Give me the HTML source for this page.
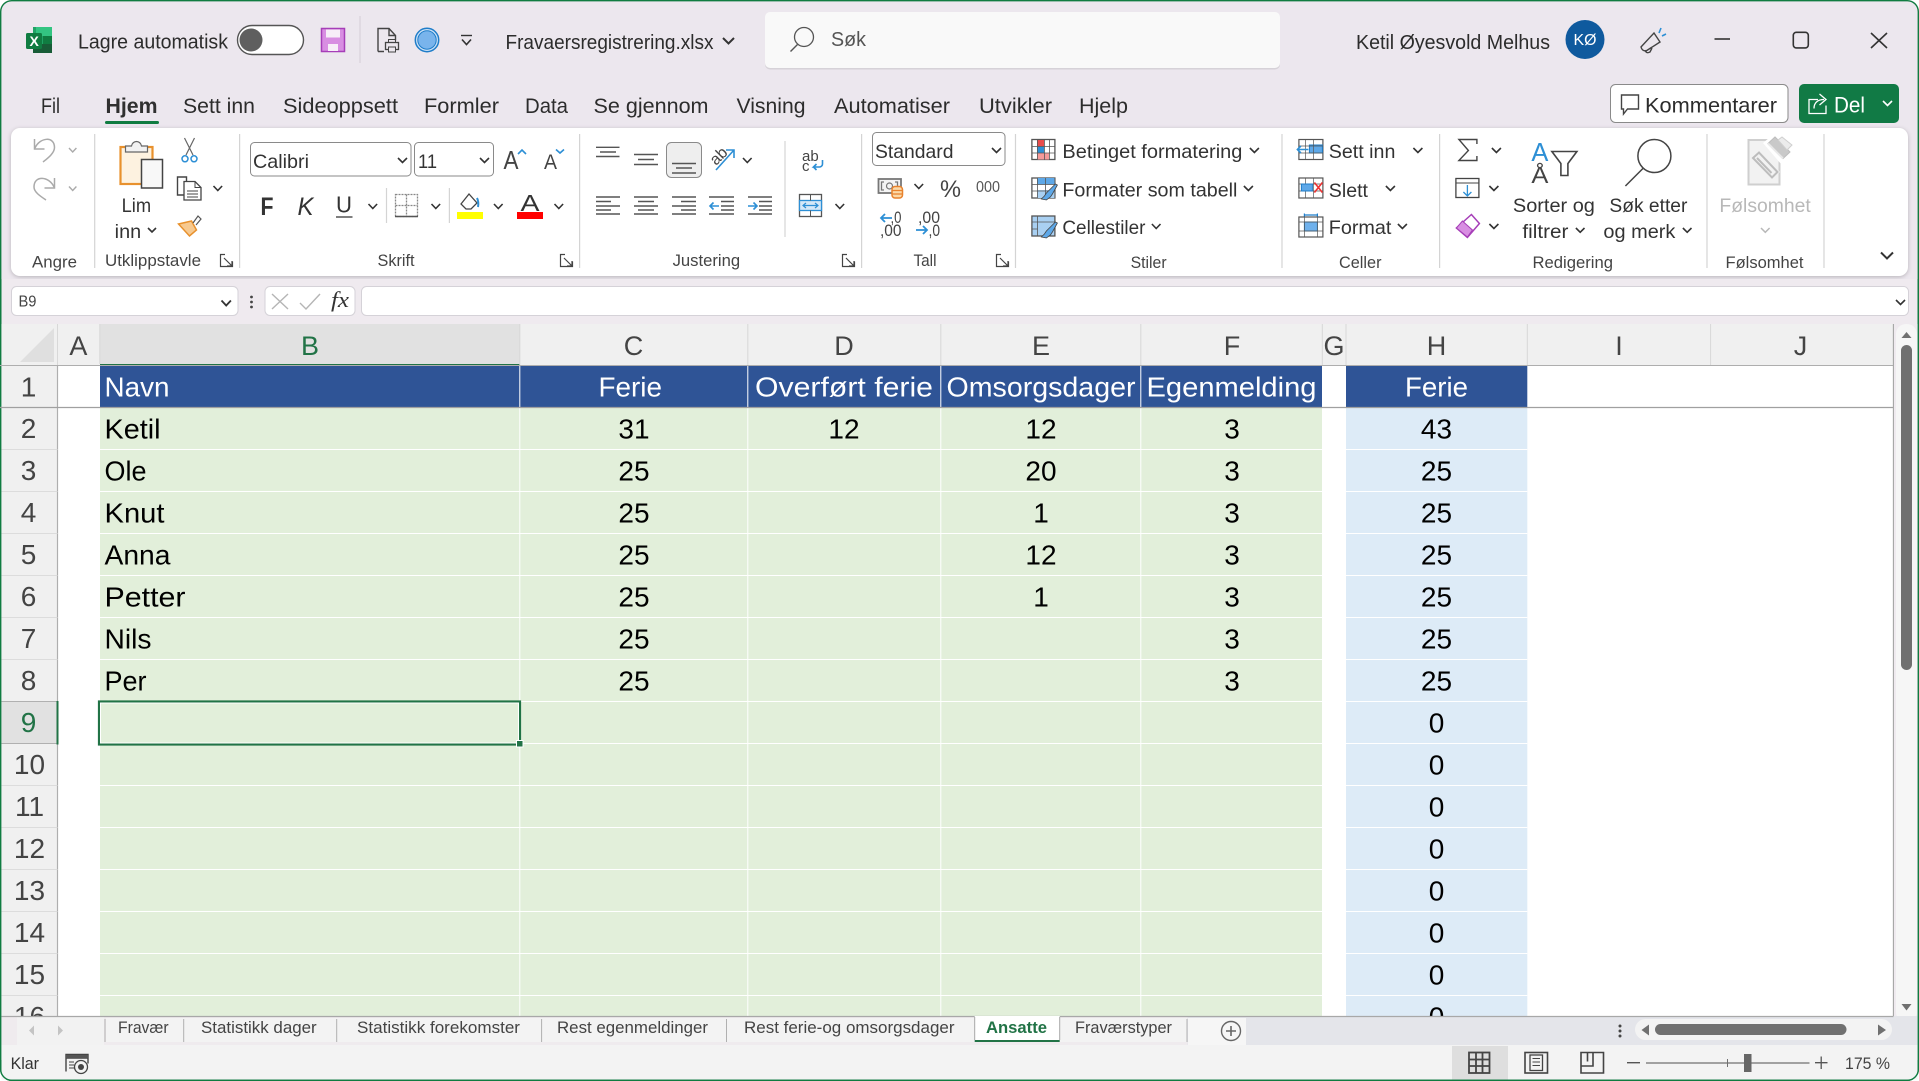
<!DOCTYPE html>
<html lang="no"><head><meta charset="utf-8"><title>Fravaersregistrering.xlsx - Excel</title>
<style>
html,body{margin:0;padding:0;background:#fff;width:1919px;height:1081px;overflow:hidden}
svg{display:block}
text{font-family:"Liberation Sans",sans-serif;fill:#333;white-space:pre}
.t{font-size:20.5px;fill:#2c2c2c}
.m{font-size:21px;fill:#2c2c2c}
.r{font-size:19.5px;fill:#333}
.g{font-size:16.5px;fill:#444}
.s{font-size:16.5px;fill:#444}
.h{font-size:27px;fill:#444;text-anchor:middle}
.n{font-size:28px;fill:#444;text-anchor:middle}
.c{font-size:28px;fill:#000}
.d{font-size:28px;fill:#000;text-anchor:middle}
.w{font-size:28px;fill:#fff}
.ch{fill:none;stroke:#333;stroke-width:1.6}
.l{fill:none;stroke:#555;stroke-width:1.4}
.k{fill:none;stroke:#444;stroke-width:1.4}
.b{fill:none;stroke:#2d8fd5;stroke-width:1.6}
.sep{stroke:#d4d4d4;stroke-width:1.2}
</style></head><body>
<svg xmlns="http://www.w3.org/2000/svg" width="1919" height="1081" viewBox="0 0 1919 1081">
<defs><clipPath id="gc"><rect x="0" y="324" width="1894" height="692"/></clipPath></defs>
<!-- window -->
<rect x="0.7" y="0.7" width="1917.6" height="1079.6" rx="11" fill="#ece7ee" stroke="#107c41" stroke-width="1.4"/>

<!-- title bar -->
<path d="M33 27h19v26H33z" fill="#21a366"/><path d="M36 27h16v9H36z" fill="#33c481"/><path d="M33 44h19v9H33z" fill="#185c37"/><path d="M43 36h9v8h-9z" fill="#107c41"/>
<rect x="26" y="33" width="16" height="16" rx="1.5" fill="#107c41"/><text x="29.5" y="46" style="font-size:14px;font-weight:bold;fill:#fff">X</text>
<text class="t" x="78" y="48.5" textLength="150" lengthAdjust="spacingAndGlyphs">Lagre automatisk</text>
<rect x="237.5" y="25.5" width="66" height="29" rx="14.5" fill="#fff" stroke="#555" stroke-width="1.4"/><circle cx="251" cy="40" r="11.5" fill="#5f5f5f"/>
<rect x="321.5" y="28.5" width="23" height="23" fill="#d88ee2" stroke="#a63eb8" stroke-width="1.5"/><rect x="326" y="29.5" width="14" height="8" fill="#f7eef8"/><rect x="328" y="44" width="10" height="7" fill="#f7eef8"/>
<line x1="360" y1="16" x2="360" y2="63" stroke="#d3ced6"/>
<path class="k" d="M378 51.5v-23h11l6.500 7v5M389 28.500v7h6.500M378 51.500h6"/><rect x="385.500" y="42.500" width="13" height="7" fill="#ece7ee" stroke="#444" stroke-width="1.300"/><rect x="388.500" y="39.500" width="7" height="3" fill="none" stroke="#444"/><rect x="388.500" y="47" width="7" height="5" fill="#ece7ee" stroke="#444"/>
<circle cx="427" cy="40" r="11.7" fill="#cde2f7" stroke="#1f7dc9" stroke-width="1.5"/><circle cx="427" cy="40" r="9.2" fill="#79b4ec" stroke="#1f7dc9"/>
<path d="M461 35.5h11" stroke="#333" stroke-width="1.4"/><path class="ch" d="M462 39.5l4.5 5 4.5-5"/>
<text class="t" x="505.500" y="49" textLength="208" lengthAdjust="spacingAndGlyphs">Fravaersregistrering.xlsx</text>
<path d="M723 38l5.5 5.5 5.5-5.5" fill="none" stroke="#333" stroke-width="2"/>
<rect x="765" y="13.5" width="515" height="56" rx="5" fill="#d6d2d8"/><rect x="765" y="12" width="515" height="56" rx="5" fill="#f9f9f9"/>
<circle cx="804" cy="37" r="9.5" fill="none" stroke="#555" stroke-width="1.3"/><line x1="797.500" y1="44.500" x2="790.500" y2="51.500" stroke="#555" stroke-width="1.4"/>
<text class="t" x="831" y="46" textLength="35" lengthAdjust="spacingAndGlyphs" style="fill:#555">Søk</text>
<g transform="translate(-1 0)">
<text class="t" x="1357" y="49" textLength="194" lengthAdjust="spacingAndGlyphs">Ketil Øyesvold Melhus</text>
<circle cx="1586" cy="39.5" r="19.5" fill="#0f5a9e"/><text x="1574.5" y="45" textLength="23" lengthAdjust="spacingAndGlyphs" style="font-size:15.5px;fill:#fff">KØ</text>
<path class="k" d="M1655 33l6 9-14 9q-4 0-5-4zM1646 50q1 4 5 2l2-4"/><path class="b" d="M1660 33l2-5M1663 36l4-2"/>
<line x1="1715.5" y1="39" x2="1731" y2="39" stroke="#333" stroke-width="1.6"/>
<rect x="1794.3" y="32.3" width="15" height="15.6" rx="3" fill="none" stroke="#333" stroke-width="1.6"/>
<path d="M1872 33l16 15M1888 33l-16 15" stroke="#333" stroke-width="1.6" fill="none"/>
</g>

<!-- menu tabs -->
<g transform="translate(-1 0)">
<text class="m" x="42" y="113" textLength="19" lengthAdjust="spacingAndGlyphs">Fil</text>
<text class="m" x="106.500" y="113" textLength="52" lengthAdjust="spacingAndGlyphs" style="font-weight:bold;fill:#303030">Hjem</text>
<rect x="106" y="121" width="54" height="3" rx="1.5" fill="#107c41"/>
<text class="m" x="184" y="113" textLength="72" lengthAdjust="spacingAndGlyphs">Sett inn</text>
<text class="m" x="284" y="113" textLength="115" lengthAdjust="spacingAndGlyphs">Sideoppsett</text>
<text class="m" x="425" y="113" textLength="75" lengthAdjust="spacingAndGlyphs">Formler</text>
<text class="m" x="526" y="113" textLength="43" lengthAdjust="spacingAndGlyphs">Data</text>
<text class="m" x="594.500" y="113" textLength="115" lengthAdjust="spacingAndGlyphs">Se gjennom</text>
<text class="m" x="737.500" y="113" textLength="69" lengthAdjust="spacingAndGlyphs">Visning</text>
<text class="m" x="835" y="113" textLength="116" lengthAdjust="spacingAndGlyphs">Automatiser</text>
<text class="m" x="980" y="113" textLength="73" lengthAdjust="spacingAndGlyphs">Utvikler</text>
<text class="m" x="1080" y="113" textLength="49" lengthAdjust="spacingAndGlyphs">Hjelp</text>
<rect x="1611.5" y="84.5" width="177.5" height="38" rx="5" fill="#fff" stroke="#8a8a8a"/>
<path class="k" d="M1622.5 95h17v14h-11l-4 5v-5h-2z"/>
<text class="m" x="1646" y="112.5" textLength="132" lengthAdjust="spacingAndGlyphs">Kommentarer</text>
<rect x="1800" y="84" width="100" height="39" rx="5" fill="#117a45"/>
<path d="M1819 99.500h-9v14h17v-8M1815 108.500c0-6 4-9 10-9M1820.500 94l6.500 5.500-6.500 5.500" fill="none" stroke="#fff" stroke-width="1.300"/>
<text class="m" x="1835" y="112.500" textLength="31" lengthAdjust="spacingAndGlyphs" style="fill:#fff;font-size:22px">Del</text>
<path d="M1884 101l4.500 4.500 4.500-4.500" fill="none" stroke="#fff" stroke-width="1.6"/>
</g>

<!-- ribbon panel -->
<rect x="11" y="128" width="1897" height="148" rx="9" fill="#fff" style="filter:drop-shadow(0 1px 2px rgba(0,0,0,.22))"/>
<g class="sep"><line x1="94.700" y1="134" x2="94.700" y2="268"/><line x1="239.600" y1="134" x2="239.600" y2="268"/><line x1="579.600" y1="134" x2="579.600" y2="268"/><line x1="861.600" y1="134" x2="861.600" y2="268"/><line x1="1015.500" y1="134" x2="1015.500" y2="268"/><line x1="1282" y1="134" x2="1282" y2="268"/><line x1="1439.600" y1="134" x2="1439.600" y2="268"/><line x1="1707" y1="134" x2="1707" y2="268"/><line x1="1824" y1="134" x2="1824" y2="268"/><line x1="386.500" y1="188" x2="386.500" y2="223"/><line x1="449.400" y1="188" x2="449.400" y2="223"/><line x1="785" y1="141" x2="785" y2="237"/></g>
<!-- group labels -->
<text class="g" x="32" y="267.500" textLength="45" lengthAdjust="spacingAndGlyphs">Angre</text>
<text class="g" x="105" y="266" textLength="96" lengthAdjust="spacingAndGlyphs">Utklippstavle</text>
<text class="g" x="377.500" y="266" textLength="37" lengthAdjust="spacingAndGlyphs">Skrift</text>
<text class="g" x="672.600" y="266" textLength="67.500" lengthAdjust="spacingAndGlyphs">Justering</text>
<text class="g" x="913.500" y="266" textLength="23" lengthAdjust="spacingAndGlyphs">Tall</text>
<text class="g" x="1130.600" y="268" textLength="36" lengthAdjust="spacingAndGlyphs">Stiler</text>
<text class="g" x="1339" y="268" textLength="42.500" lengthAdjust="spacingAndGlyphs">Celler</text>
<text class="g" x="1532.500" y="268" textLength="80.500" lengthAdjust="spacingAndGlyphs">Redigering</text>
<text class="g" x="1725.500" y="268" textLength="78" lengthAdjust="spacingAndGlyphs">Følsomhet</text>
<!-- launchers -->
<path class="k" style="stroke-width:1.200" d="M225 254.500h-4.500v12h12v-5M224 258l8 8m0-5v5h-5"/>
<path class="k" style="stroke-width:1.200" d="M565 254.500h-4.500v12h12v-5M564 258l8 8m0-5v5h-5"/>
<path class="k" style="stroke-width:1.200" d="M847 254.500h-4.500v12h12v-5M846 258l8 8m0-5v5h-5"/>
<path class="k" style="stroke-width:1.200" d="M1001 254.500h-4.500v12h12v-5M1000 258l8 8m0-5v5h-5"/>

<!-- undo/redo -->
<path d="M34.500 139v10h10M35 148C40 137 54.500 136 54.500 147.500C54.500 153 48 158 43 162" fill="none" stroke="#aaa" stroke-width="1.500"/>
<path d="M54.500 178v10h-10M54 187C49 176 34 175 34 187C34 192 40 196 46 200" fill="none" stroke="#aaa" stroke-width="1.500"/>
<path d="M69 148l3.700 4 3.700-4M69 186.500l3.700 4 3.700-4" fill="none" stroke="#aaa" stroke-width="1.400"/>
<!-- clipboard -->
<rect x="120.500" y="147" width="32" height="37" fill="#fdf2e0" stroke="#e8912d" stroke-width="2.200"/>
<path d="M125.500 152v-6h6c1-6 9-6 10 0h6v6z" fill="#f2f2f2" stroke="#666" stroke-width="1.200"/>
<rect x="141.500" y="159.500" width="21" height="28.500" fill="#f8f8f8" stroke="#444" stroke-width="1.500"/>
<text class="r" x="121.600" y="212" textLength="29.500" lengthAdjust="spacingAndGlyphs">Lim</text>
<text class="r" x="114.700" y="238" textLength="26.500" lengthAdjust="spacingAndGlyphs">inn</text>
<path class="ch" d="M148 228l4 4 4-4"/>
<path d="M186 155l8.500-17M193 155l-8.500-17" fill="none" stroke="#666" stroke-width="1.200"/><circle cx="185" cy="158.800" r="3" fill="none" stroke="#2d8fd5" stroke-width="1.500"/><circle cx="194" cy="158.800" r="3" fill="none" stroke="#2d8fd5" stroke-width="1.500"/>
<path class="k" d="M184 195h-6.500v-18h9v4"/><path d="M184 181.500h11l6 6v12.500h-17z" fill="#fff" stroke="#444" stroke-width="1.300"/><path class="k" style="stroke-width:1" d="M187 191h11M187 194h11M187 197h11M195 181.500v6h6"/>
<path class="ch" d="M213.500 186l4.300 4.500 4.300-4.500"/>
<path d="M178.500 224l13-3 5 9-7 6z" fill="#f7c98f" stroke="#e8912d" stroke-width="1.500"/><path d="M193 223l5-7 3 3-5 6" fill="#fff" stroke="#555" stroke-width="1.200"/>

<!-- font -->
<rect x="250.500" y="142.500" width="160.500" height="33.500" rx="4" fill="#fff" stroke="#8a8a8a"/>
<text class="r" x="253" y="168" textLength="56" lengthAdjust="spacingAndGlyphs">Calibri</text><path class="ch" d="M398 158l4.500 4.500 4.500-4.500"/>
<rect x="414.500" y="142.500" width="79" height="33.500" rx="4" fill="#fff" stroke="#8a8a8a"/>
<text class="r" x="418" y="168" textLength="19" lengthAdjust="spacingAndGlyphs">11</text><path class="ch" d="M480 158l4.500 4.500 4.500-4.500"/>
<text x="503.500" y="169" textLength="15" lengthAdjust="spacingAndGlyphs" style="font-size:26px;fill:#444">A</text><path class="b" d="M518 154l4-4 4 4"/>
<text x="544" y="169" textLength="13" lengthAdjust="spacingAndGlyphs" style="font-size:21px;fill:#444">A</text><path class="b" d="M556 149.500l4 3.500 4-3.500"/>
<text x="260.500" y="215" textLength="13" lengthAdjust="spacingAndGlyphs" style="font-size:25px;font-weight:bold;fill:#333">F</text>
<text x="297.500" y="215" textLength="16" lengthAdjust="spacingAndGlyphs" style="font-size:25px;font-style:italic;fill:#333">K</text>
<text x="336" y="212.500" textLength="16" lengthAdjust="spacingAndGlyphs" style="font-size:23px;fill:#333">U</text><line x1="336" y1="217" x2="352.500" y2="217" stroke="#333" stroke-width="1.300"/>
<path class="ch" d="M368.500 204l4.300 4.500 4.300-4.500"/>
<g fill="none" stroke="#888" stroke-width="1.300" stroke-dasharray="2 1"><rect x="395.500" y="194.500" width="22" height="22"/><path d="M406.500 194.500v22M395.500 205.500h22"/></g><line x1="395" y1="216.500" x2="418" y2="216.500" stroke="#555" stroke-width="1.500"/>
<path class="ch" d="M431.500 204l4.300 4.500 4.300-4.500"/>
<path d="M461 204l8-10 8 9-6 6h-5z" fill="#fff" stroke="#444" stroke-width="1.300"/><path d="M477 198q2 4 1 9" fill="none" stroke="#2d8fd5" stroke-width="2"/><rect x="457" y="212" width="26" height="7" fill="#ffff00"/>
<path class="ch" d="M494 204l4.300 4.500 4.300-4.500"/>
<text x="520.500" y="211" textLength="19" lengthAdjust="spacingAndGlyphs" style="font-size:23px;fill:#333">A</text><rect x="517" y="212" width="26" height="7" fill="#f00"/>
<path class="ch" d="M554.500 204l4.300 4.500 4.300-4.500"/>
<!-- align -->
<g class="l"><path d="M596 147.300h23.500M600 152h16M596 156.500h23.500"/><path d="M634 154.500h24M638 159.500h16M634 164.500h24"/></g>
<rect x="666.500" y="142.500" width="35" height="35" rx="5" fill="#eee" stroke="#8a8a8a"/>
<path class="l" d="M672 163.500h24M676 168h16M672 173h24"/>
<text x="0" y="0" transform="translate(716 166) rotate(-45)" style="font-size:16px;fill:#444">ab</text><path class="b" d="M716 170l18-20M726 150h8v8"/>
<path class="ch" d="M743 158l4.300 4.500 4.300-4.500"/>
<g class="l"><path d="M596 197h24M596 201.500h15M596 206h24M596 210h15M596 214h24"/><path d="M634 197h24M638 201.500h16M634 206h24M638 210h16M634 214h24"/><path d="M672 197h24M681 201.500h15M672 206h24M681 210h15M672 214h24"/><path d="M709 197h25M721 201.500h13M721 206h13M721 210h13M709 214h25"/><path d="M748 197h24M759 201.500h13M759 206h13M759 210h13M748 214h24"/></g>
<path class="b" d="M719 206h-9m3.500-3.500l-3.500 3.500 3.500 3.500M748 206h9m-3.500-3.500l3.500 3.500-3.500 3.500"/>
<text x="802" y="161" style="font-size:15px;fill:#444">ab</text><text x="802" y="171" style="font-size:15px;fill:#444">c</text><path class="b" d="M822.500 160v4a3 3 0 0 1-3 3h-6l3-3m-3 3l3 3"/>
<rect x="799.500" y="194.500" width="22" height="22" fill="#fff" stroke="#555" stroke-width="1.300"/><rect x="799.500" y="200.500" width="22" height="10" fill="#d5e8f8" stroke="#2d8fd5" stroke-width="1.300"/><path d="M810.500 194.500v6M810.500 210.500v6" stroke="#555"/><path class="b" style="stroke-width:1.200" d="M803 205.500h15m-3-2.500l3 2.500-3 2.500m-9-5l-3 2.500 3 2.500"/>
<path class="ch" d="M835.500 204l4.300 4.500 4.300-4.500"/>
<!-- number -->
<rect x="872.500" y="132.500" width="132.500" height="33" rx="4" fill="#fff" stroke="#8a8a8a"/>
<text class="r" x="875" y="158" textLength="78.500" lengthAdjust="spacingAndGlyphs">Standard</text><path class="ch" d="M992 148l4.500 4.500 4.500-4.500"/>
<rect x="878.500" y="179" width="22.500" height="14" fill="#f4f4f4" stroke="#777" stroke-width="1.800"/><path d="M884 182h-2.500v8h2.500M895 182h2.500v8H895" fill="none" stroke="#777" stroke-width="1.300"/><circle cx="889.500" cy="186" r="3" fill="none" stroke="#777" stroke-width="1.200"/>
<rect x="892" y="186.500" width="10.500" height="11.500" rx="3" fill="#fbd9a8" stroke="#e8822d" stroke-width="1.500"/><path d="M892 190.500h10.500M892 194h10.500" stroke="#e8822d" stroke-width="1.200"/>
<path class="ch" d="M914.500 184l4.300 4.500 4.300-4.500"/>
<text x="940" y="197" textLength="21" lengthAdjust="spacingAndGlyphs" style="font-size:24px;fill:#444">%</text>
<text x="976" y="192" textLength="24" lengthAdjust="spacingAndGlyphs" style="font-size:15.500px;fill:#555">000</text>
<text x="890.500" y="223" textLength="11" lengthAdjust="spacingAndGlyphs" style="font-size:16.500px;fill:#444">,0</text><text x="880" y="236" textLength="21.500" lengthAdjust="spacingAndGlyphs" style="font-size:16.500px;fill:#444">,00</text><path class="b" style="stroke-width:1.800" d="M892 218h-11m4-4l-4 4 4 4"/>
<text x="918" y="223" textLength="22" lengthAdjust="spacingAndGlyphs" style="font-size:16.500px;fill:#444">,00</text><text x="928.500" y="236" textLength="11.500" lengthAdjust="spacingAndGlyphs" style="font-size:16.500px;fill:#444">,0</text><path class="b" style="stroke-width:1.800" d="M916 230h11m-4-4l4 4-4 4"/>
<!-- styles -->
<g transform="translate(-.6 0)">
<rect x="1032.500" y="139.500" width="23" height="20" fill="#fff" stroke="#555" stroke-width="1.300"/><rect x="1038" y="140" width="7" height="6.500" fill="#e94c4c"/><rect x="1038" y="146.500" width="7" height="6.500" fill="#2d8fd5"/><rect x="1038" y="153" width="12" height="6.500" fill="#f59a9a"/><path d="M1032.500 146.500h23M1032.500 153h23M1038 139.500v20M1045 139.500v20M1050 139.500v20" stroke="#555" stroke-width=".8"/>
<text class="r" x="1063" y="158" textLength="180" lengthAdjust="spacingAndGlyphs">Betinget formatering</text><path class="ch" d="M1250.500 148l4.500 4.500 4.500-4.500"/>
<rect x="1032.500" y="178" width="23" height="20" fill="#fff" stroke="#555" stroke-width="1.300"/><rect x="1038" y="178" width="17" height="6.500" fill="#5ea8e8"/><rect x="1038" y="190" width="17" height="8" fill="#a9d0f2"/><path d="M1032.500 184.500h23M1032.500 191h23M1038 178v20M1046 178v20" stroke="#555" stroke-width=".8"/><path d="M1056 184l-9 9-2 3-3 3 5 1 4-3 2-3 5-9z" fill="#5ea8e8" stroke="#444" stroke-width=".8"/>
<text class="r" x="1063" y="196.700" textLength="175" lengthAdjust="spacingAndGlyphs">Formater som tabell</text><path class="ch" d="M1244.500 186l4.500 4.500 4.500-4.500"/>
<rect x="1032.500" y="216" width="23" height="20" fill="#a9d0f2" stroke="#555" stroke-width="1.300"/><path d="M1038 216v20M1032.500 222h23M1032.500 229h6" stroke="#555" stroke-width=".8"/><path d="M1056 222l-9 9-2 3-3 3 5 1 4-3 2-3 5-9z" fill="#5ea8e8" stroke="#444" stroke-width=".8"/>
<text class="r" x="1063" y="234" textLength="83" lengthAdjust="spacingAndGlyphs">Cellestiler</text><path class="ch" d="M1152.500 224l4.300 4.500 4.300-4.500"/>
<!-- cells -->
<rect x="1299.500" y="139.500" width="24" height="20" fill="#fff" stroke="#555" stroke-width="1.200"/><rect x="1310" y="145" width="13" height="8" fill="#5ea8e8" stroke="#1f7dc9"/><path d="M1299.500 146h24M1299.500 153h24M1306 139.500v20M1314 139.500v20" stroke="#555" stroke-width=".7"/><path d="M1309 149.500h-11m3.500-3.500l-3.500 3.500 3.500 3.500" fill="none" stroke="#2d8fd5" stroke-width="1.600"/>
<text class="r" x="1329.400" y="158" textLength="66.600" lengthAdjust="spacingAndGlyphs">Sett inn</text><path class="ch" d="M1414 148l4.500 4.500 4.500-4.500"/>
<rect x="1299.500" y="178" width="24" height="20" fill="#fff" stroke="#555" stroke-width="1.200"/><path d="M1299.500 184h24M1299.500 191h24M1306 178v20M1314 178v20" stroke="#555" stroke-width=".7"/><rect x="1302" y="184" width="11" height="7" fill="#5ea8e8" stroke="#1f7dc9"/><path d="M1315 182.500l8 10M1323 182.500l-8 10" stroke="#e33" stroke-width="1.600"/>
<text class="r" x="1329.400" y="197" textLength="39.200" lengthAdjust="spacingAndGlyphs">Slett</text><path class="ch" d="M1386.500 186l4.500 4.500 4.500-4.500"/>
<rect x="1299.500" y="217" width="24" height="20" fill="#fff" stroke="#555" stroke-width="1.200"/><rect x="1305" y="222" width="13" height="9" fill="#6fb1ec" stroke="#1f7dc9"/><path d="M1299.500 222h24M1299.500 231h24M1305 217v20M1318 217v20" stroke="#555" stroke-width=".7"/><path d="M1305 213.500v3M1318 213.500v3M1305 215h13" stroke="#1f7dc9" stroke-width="1.200"/>
<text class="r" x="1329.400" y="234" textLength="62.600" lengthAdjust="spacingAndGlyphs">Format</text><path class="ch" d="M1398.500 224l4.500 4.500 4.500-4.500"/>
<!-- editing -->
<path class="k" d="M1477.500 144v-4.500h-18l9.500 11-9.500 10h18v-4.500"/><path class="ch" d="M1492.500 148l4.500 4.500 4.500-4.500"/>
<rect x="1456.500" y="178.500" width="23" height="19" fill="#fff" stroke="#444" stroke-width="1.300"/><line x1="1456.500" y1="183" x2="1479.500" y2="183" stroke="#444"/><path class="b" style="stroke-width:1.300" d="M1468 185v11m-4-4l4 4 4-4"/><path class="ch" d="M1490 186l4.500 4.500 4.500-4.500"/>
<path d="M1472 214.500l8 9-12 14-11-9.500z" fill="#fff" stroke="#a63eb8" stroke-width="1.500"/><path d="M1463 221l10 9-5 7-11-9z" fill="#d88ee2" stroke="#a63eb8"/><path class="ch" d="M1490 224l4.500 4.500 4.500-4.500"/>
<text x="1532" y="161" textLength="17" lengthAdjust="spacingAndGlyphs" style="font-size:26px;fill:#2d8fd5">A</text>
<text x="1532" y="183" textLength="17" lengthAdjust="spacingAndGlyphs" style="font-size:23px;fill:#444">Å</text>
<path class="k" style="stroke-width:1.600" d="M1552.500 151.500h25l-9 12v12h-7v-12z"/>
<text class="r" x="1513.500" y="212" textLength="82" lengthAdjust="spacingAndGlyphs">Sorter og</text>
<text class="r" x="1523" y="238" textLength="46" lengthAdjust="spacingAndGlyphs">filtrer</text><path class="ch" d="M1576.500 228l4.300 4.300 4.300-4.300"/>
<circle cx="1655" cy="156" r="16.500" fill="none" stroke="#444" stroke-width="1.500"/><line x1="1643.500" y1="168.500" x2="1626" y2="186" stroke="#444" stroke-width="1.500"/>
<text class="r" x="1610" y="212" textLength="78" lengthAdjust="spacingAndGlyphs">Søk etter</text>
<text class="r" x="1604" y="238" textLength="72" lengthAdjust="spacingAndGlyphs">og merk</text><path class="ch" d="M1683.500 228l4.300 4.300 4.300-4.300"/>
</g>
<!-- sensitivity -->
<rect x="1748.500" y="140" width="31" height="44.500" fill="#f2f2f2" stroke="#cfcfcf" stroke-width="2"/>
<path d="M1751 158l8-8 21 22-8 8z" fill="#f2f2f2"/>
<path d="M1753 158l6-5.500 18.500 19.500-5.500 5.500zM1757 158l14.500 15" fill="none" stroke="#bdbdbd" stroke-width="2"/>
<path d="M1763 143l12-10 20 14-9 15-5 2z" fill="#fff"/>
<path d="M1768 143.500l7-6.500 15 15-7 6.500z" fill="#c9c9c9" stroke="#bdbdbd"/><path d="M1768 143.500l15 15" stroke="#e9e9e9" stroke-width="2"/>
<path d="M1778 140l4-3 10 8-5 5z" fill="#ececec" stroke="#cfcfcf"/>
<text class="r" x="1719.400" y="212" textLength="91.400" lengthAdjust="spacingAndGlyphs" style="fill:#b8b8b8">Følsomhet</text><path d="M1761 228l4.300 4.300 4.300-4.300" fill="none" stroke="#b8b8b8" stroke-width="1.500"/>
<path d="M1881 252.500l6 6 6-6" fill="none" stroke="#333" stroke-width="2"/>

<!-- formula bar -->
<rect x="0.700" y="279" width="1917.600" height="45" fill="#efeaef"/>
<rect x="0" y="279" width="1.500" height="45" fill="#107c41"/>
<rect x="1917.500" y="279" width="1.500" height="45" fill="#107c41"/>
<rect x="11.500" y="286.500" width="226.500" height="29" rx="5" fill="#fff" stroke="#d5d2d8"/>
<text x="18.500" y="306.500" textLength="18" lengthAdjust="spacingAndGlyphs" style="font-size:15.500px;fill:#444">B9</text><path class="ch" style="stroke-width:1.800" d="M221.500 300.500l4.700 5 4.700-5"/>
<circle cx="251.500" cy="297" r="1.400" fill="#444"/><circle cx="251.500" cy="302" r="1.400" fill="#444"/><circle cx="251.500" cy="307" r="1.400" fill="#444"/>
<rect x="265" y="286.500" width="90" height="29" rx="5" fill="#fff" stroke="#d5d2d8"/>
<path d="M272 294l16 15M288 294l-16 15M300 303l6 6 14-15" fill="none" stroke="#b5b5b5" stroke-width="1.400"/>
<text x="331" y="307" textLength="18" lengthAdjust="spacingAndGlyphs" style="font-family:'Liberation Serif',serif;font-style:italic;font-size:22px;fill:#333">fx</text>
<rect x="361.500" y="286.500" width="1547" height="29" rx="5" fill="#fff" stroke="#d5d2d8"/>
<path class="ch" style="stroke-width:1.600" d="M1896 300l4.500 4.500 4.500-4.500"/>

<!-- grid -->
<rect x="1.500" y="324" width="1892" height="692" fill="#fff"/>
<rect x="1.500" y="324" width="1892" height="41.500" fill="#f0f0f0"/>
<rect x="1.500" y="324" width="56" height="692" fill="#f0f0f0"/>
<path d="M20 362l34-34v34z" fill="#dfdfdf"/>
<rect x="100" y="324" width="420" height="40" fill="#e1e1e1"/>
<rect x="100" y="364" width="420" height="2.200" fill="#217346"/>
<path d="M57.500 324v692M99.800 324v40M519.800 324v41M747.800 324v41M940.800 324v41M1140.800 324v41M1322.300 324v41M1346 324v41M1527.300 324v41M1710.600 324v41" stroke="#d8d8d8" fill="none"/>
<line x1="57.500" y1="366" x2="57.500" y2="1016" stroke="#aeaeae" stroke-width="1.200"/>
<line x1="0" y1="365.500" x2="1894" y2="365.500" stroke="#aeaeae"/>
<rect x="100" y="366" width="1222" height="41" fill="#2f5496"/>
<rect x="1346" y="366" width="181.300" height="41" fill="#2f5496"/>
<rect x="100" y="408" width="1222" height="608" fill="#e2efda"/>
<rect x="1346" y="408" width="181.300" height="608" fill="#ddebf7"/>
<path d="M519.800 366v650M747.800 366v650M940.800 366v650M1140.800 366v650" stroke="#fff" fill="none"/>
<path d="M100 449.500h1222M100 491.500h1222M100 533.500h1222M100 575.500h1222M100 617.500h1222M100 659.500h1222M100 701.500h1222M100 743.500h1222M100 785.500h1222M100 827.500h1222M100 869.500h1222M100 911.500h1222M100 953.500h1222M100 995.500h1222M1346 449.500h181.300M1346 491.500h181.300M1346 533.500h181.300M1346 575.500h181.300M1346 617.500h181.300M1346 659.500h181.300M1346 701.500h181.300M1346 743.500h181.300M1346 785.500h181.300M1346 827.500h181.300M1346 869.500h181.300M1346 911.500h181.300M1346 953.500h181.300M1346 995.500h181.300" stroke="#fff" fill="none"/>
<path d="M1.500 449.500h56M1.500 491.500h56M1.500 533.500h56M1.500 575.500h56M1.500 617.500h56M1.500 659.500h56M1.500 701.500h56M1.500 743.500h56M1.500 785.500h56M1.500 827.500h56M1.500 869.500h56M1.500 911.500h56M1.500 953.500h56M1.500 995.500h56" stroke="#dcdcdc" fill="none"/>
<line x1="0" y1="407.500" x2="1893.500" y2="407.500" stroke="#a0a0a0" stroke-width="1.300"/>
<rect x="1.500" y="701" width="55" height="43" fill="#e1e1e1"/><path d="M1.500 701.500h55M1.500 743.500h55" stroke="#b0b0b0"/><rect x="56.500" y="701" width="2" height="43.500" fill="#217346"/>
<line x1="1893.500" y1="324" x2="1893.500" y2="1016" stroke="#a8a8a8" stroke-width="1.300"/>

<g clip-path="url(#gc)">
<text class="h" x="78.400" y="355">A</text><text class="h" x="310" y="355" style="fill:#217346">B</text><text class="h" x="633.500" y="355">C</text><text class="h" x="844" y="355">D</text><text class="h" x="1041" y="355">E</text><text class="h" x="1232" y="355">F</text><text class="h" x="1334" y="355">G</text><text class="h" x="1436.500" y="355">H</text><text class="h" x="1619" y="355">I</text><text class="h" x="1800.500" y="355">J</text>
<text class="n" x="28.500" y="396.500">1</text><text class="n" x="28.500" y="438">2</text><text class="n" x="28.500" y="480">3</text><text class="n" x="28.500" y="522">4</text><text class="n" x="28.500" y="564">5</text><text class="n" x="28.500" y="606">6</text><text class="n" x="28.500" y="648">7</text><text class="n" x="28.500" y="690">8</text><text class="n" x="28.500" y="732" style="fill:#217346">9</text><text class="n" x="29.500" y="774">10</text><text class="n" x="29.500" y="816">11</text><text class="n" x="29.500" y="858">12</text><text class="n" x="29.500" y="900">13</text><text class="n" x="29.500" y="942">14</text><text class="n" x="29.500" y="984">15</text><text class="n" x="29.500" y="1026">16</text>

<text class="w" x="104.500" y="396.500" textLength="65" lengthAdjust="spacingAndGlyphs">Navn</text>
<text class="w" x="598.500" y="396.500" textLength="63.500" lengthAdjust="spacingAndGlyphs">Ferie</text>
<text class="w" x="755" y="396.500" textLength="178" lengthAdjust="spacingAndGlyphs">Overført ferie</text>
<text class="w" x="946.500" y="396.500" textLength="189" lengthAdjust="spacingAndGlyphs">Omsorgsdager</text>
<text class="w" x="1146.500" y="396.500" textLength="170" lengthAdjust="spacingAndGlyphs">Egenmelding</text>
<text class="w" x="1405" y="396.500" textLength="63" lengthAdjust="spacingAndGlyphs">Ferie</text>

<text class="c" x="104.500" y="438.500" textLength="56" lengthAdjust="spacingAndGlyphs">Ketil</text>
<text class="c" x="104.500" y="480.500" textLength="42" lengthAdjust="spacingAndGlyphs">Ole</text>
<text class="c" x="104.500" y="522.500" textLength="60" lengthAdjust="spacingAndGlyphs">Knut</text>
<text class="c" x="104.500" y="564.500" textLength="66" lengthAdjust="spacingAndGlyphs">Anna</text>
<text class="c" x="104.500" y="606.500" textLength="81" lengthAdjust="spacingAndGlyphs">Petter</text>
<text class="c" x="104.500" y="648.500" textLength="47" lengthAdjust="spacingAndGlyphs">Nils</text>
<text class="c" x="104.500" y="690.500" textLength="42" lengthAdjust="spacingAndGlyphs">Per</text>

<text class="d" x="634" y="438.500">31</text><text class="d" x="634" y="480.500">25</text><text class="d" x="634" y="522.500">25</text><text class="d" x="634" y="564.500">25</text><text class="d" x="634" y="606.500">25</text><text class="d" x="634" y="648.500">25</text><text class="d" x="634" y="690.500">25</text>
<text class="d" x="844" y="438.500">12</text>
<text class="d" x="1041" y="438.500">12</text><text class="d" x="1041" y="480.500">20</text><text class="d" x="1041" y="522.500">1</text><text class="d" x="1041" y="564.500">12</text><text class="d" x="1041" y="606.500">1</text>
<text class="d" x="1232" y="438.500">3</text><text class="d" x="1232" y="480.500">3</text><text class="d" x="1232" y="522.500">3</text><text class="d" x="1232" y="564.500">3</text><text class="d" x="1232" y="606.500">3</text><text class="d" x="1232" y="648.500">3</text><text class="d" x="1232" y="690.500">3</text>
<text class="d" x="1436.500" y="438.500">43</text><text class="d" x="1436.500" y="480.500">25</text><text class="d" x="1436.500" y="522.500">25</text><text class="d" x="1436.500" y="564.500">25</text><text class="d" x="1436.500" y="606.500">25</text><text class="d" x="1436.500" y="648.500">25</text><text class="d" x="1436.500" y="690.500">25</text><text class="d" x="1436.500" y="732.500">0</text><text class="d" x="1436.500" y="774.500">0</text><text class="d" x="1436.500" y="816.500">0</text><text class="d" x="1436.500" y="858.500">0</text><text class="d" x="1436.500" y="900.500">0</text><text class="d" x="1436.500" y="942.500">0</text><text class="d" x="1436.500" y="984.500">0</text><text class="d" x="1436.500" y="1026.500">0</text>
</g>
<!-- selection -->
<rect x="99" y="701.500" width="421" height="43" fill="none" stroke="#217346" stroke-width="2.200"/>
<rect x="100.500" y="703" width="418" height="40" fill="none" stroke="#fff" stroke-width="1"/>
<rect x="516.500" y="740.500" width="6.500" height="6.500" fill="#217346" stroke="#fff"/>

<!-- vertical scrollbar -->
<rect x="1894" y="324" width="23.500" height="692" fill="#efeaef"/>
<rect x="1896" y="324" width="21" height="698" rx="10" fill="#f6f6f6"/>
<path d="M1901.500 338l5-6 5 6z" fill="#707070"/>
<rect x="1901" y="345" width="11" height="325" rx="5.500" fill="#707070"/>
<path d="M1901.500 1004h10l-5 6.500z" fill="#707070"/>

<!-- sheet tabs -->
<rect x="1.500" y="1016" width="1916" height="29" fill="#e4e5ea"/>
<rect x="1.500" y="1016" width="1186" height="29" fill="#efebee"/>
<rect x="17" y="1017" width="87" height="28" fill="#f2f2f2"/>
<path d="M34 1025.500l-5 5 5 5zM58 1025.500l5 5-5 5z" fill="#c4c4c4"/>
<rect x="106" y="1018" width="1081" height="24" fill="#f3f3f3"/>
<line x1="1.500" y1="1016.500" x2="1893.500" y2="1016.500" stroke="#a8a8a8" stroke-width="1.300"/>
<path d="M105 1019v23M183.700 1019v23M336.700 1019v23M541.600 1019v23M726.500 1019v23M1187 1019v23" stroke="#b0b0b0" fill="none"/>
<text class="s" x="118" y="1033" textLength="50.600" lengthAdjust="spacingAndGlyphs">Fravær</text>
<text class="s" x="201" y="1033" textLength="115.700" lengthAdjust="spacingAndGlyphs">Statistikk dager</text>
<text class="s" x="357" y="1033" textLength="163" lengthAdjust="spacingAndGlyphs">Statistikk forekomster</text>
<text class="s" x="557" y="1033" textLength="151" lengthAdjust="spacingAndGlyphs">Rest egenmeldinger</text>
<text class="s" x="744" y="1033" textLength="210.500" lengthAdjust="spacingAndGlyphs">Rest ferie-og omsorgsdager</text>
<rect x="974.700" y="1016" width="85" height="24" fill="#fff"/>
<rect x="974.700" y="1040" width="85" height="2" fill="#217346"/>
<path d="M974.700 1017v23M1059.700 1017v23" stroke="#a8a8a8"/>
<text x="986" y="1033" textLength="61" lengthAdjust="spacingAndGlyphs" style="font-size:16.500px;font-weight:bold;fill:#217346">Ansatte</text>
<text class="s" x="1075" y="1033" textLength="97" lengthAdjust="spacingAndGlyphs">Fraværstyper</text>
<rect x="1188" y="1018" width="58" height="27" fill="#f6f6f6"/>
<circle cx="1231" cy="1031" r="9.500" fill="none" stroke="#666" stroke-width="1.400"/><path d="M1226 1031h10M1231 1026v10" stroke="#666" stroke-width="1.600"/>
<circle cx="1620" cy="1026" r="1.500" fill="#444"/><circle cx="1620" cy="1031" r="1.500" fill="#444"/><circle cx="1620" cy="1036" r="1.500" fill="#444"/>
<rect x="1635" y="1019" width="257" height="21" rx="10.500" fill="#f3f3f3"/>
<path d="M1649 1024.500l-7.500 5.500 7.500 5.500zM1878 1024.500l8 5.500-8 5.500z" fill="#707070"/>
<rect x="1655" y="1024" width="191.500" height="11" rx="5.500" fill="#707070"/>

<!-- status bar -->
<rect x="1.500" y="1045" width="1916" height="34.500" fill="#f3f3f3"/>
<path d="M0.700 1060v9.500a11 11 0 0 0 11 10.800h1895.600a11 11 0 0 0 11-10.800V1060" fill="none" stroke="#107c41" stroke-width="1.400"/>
<text x="10.600" y="1069" textLength="28.400" lengthAdjust="spacingAndGlyphs" style="font-size:17px;fill:#333">Klar</text>
<path class="k" d="M66 1071.500v-17h22v9M66 1058h22"/><path d="M66 1055h22v3H66z" fill="#555"/><path class="k" style="stroke-width:1" d="M69 1062h5M69 1065h5M69 1068h5"/><circle cx="81" cy="1067" r="6.500" fill="#f3f3f3" stroke="#444" stroke-width="1.300"/><circle cx="81" cy="1067" r="3" fill="#444"/>
<rect x="1452" y="1046" width="56" height="33.500" fill="#dedede"/>
<rect x="1469" y="1052.500" width="20.500" height="20.500" fill="none" stroke="#444" stroke-width="1.800"/><path d="M1476 1052.500v20.500M1482.500 1052.500v20.500M1469 1059.500h20.500M1469 1066h20.500" stroke="#444" stroke-width="1.800"/>
<rect x="1525" y="1052.500" width="22.500" height="20.500" fill="none" stroke="#444" stroke-width="1.600"/><rect x="1530" y="1055" width="12.500" height="15.500" fill="none" stroke="#444" stroke-width="1.300"/><path d="M1532.500 1058.500h7.500M1532.500 1062h7.500M1532.500 1065.500h7.500" stroke="#444"/>
<path d="M1581 1052.500h22.500v20.500H1581zM1581 1066h12v-13.500M1587.500 1052.500v9" fill="none" stroke="#444" stroke-width="1.600"/>
<line x1="1627" y1="1062.700" x2="1640" y2="1062.700" stroke="#555" stroke-width="1.400"/>
<line x1="1646" y1="1063" x2="1809.500" y2="1063" stroke="#707070" stroke-width="1.300"/><line x1="1727.500" y1="1059" x2="1727.500" y2="1067" stroke="#707070"/>
<rect x="1744" y="1054" width="7.500" height="18" fill="#666"/>
<path d="M1815 1062.700h12.500M1821.200 1056.500v12.500" stroke="#555" stroke-width="1.300"/>
<text x="1845" y="1069" textLength="45" lengthAdjust="spacingAndGlyphs" style="font-size:16.500px;fill:#444">175 %</text>
</svg>
</body></html>
